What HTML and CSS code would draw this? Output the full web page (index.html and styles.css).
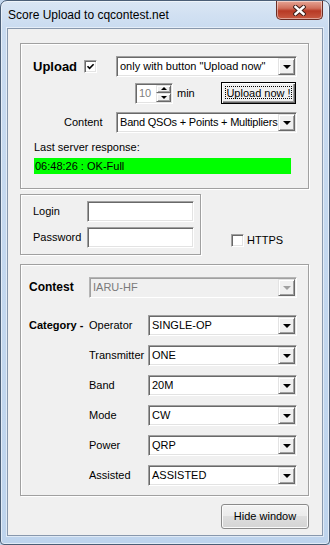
FILE: index.html
```html
<!DOCTYPE html>
<html lang="en">
  <head>
    <title>Score Upload to cqcontest.net</title>
    <meta charset="utf-8">
    <link rel="stylesheet" href="styles.css">
  </head>
  <body>

  <div class="window">

    <div class="titlebar">
      <span class="title">Score Upload to cqcontest.net</span>
      <span class="close">
        <svg width="13" height="11" viewBox="0 0 13 11">
          <path d="M2.5 2 L10.5 9 M10.5 2 L2.5 9" stroke="#40201b" stroke-width="4.4" stroke-linecap="square"/>
          <path d="M2.5 2 L10.5 9 M10.5 2 L2.5 9" stroke="#fff" stroke-width="2.4" stroke-linecap="square"/>
        </svg>
      </span>
    </div>

    <div class="client">

      <!-- upload settings -->
      <div class="group g-upload">
        <div class="row r-upload">
          <div class="upload-cell">
            <span class="lbl-big">Upload</span>
            <span class="check check-upload">
              <svg width="9" height="9" viewBox="0 0 9 9"><path d="M1.5 4.2 L3.6 6.4 L7.6 2.2" fill="none" stroke="#000" stroke-width="1.6"/></svg>
            </span>
          </div>
          <div class="combo c-wide">
            <span class="val">only with button "Upload now"</span>
            <span class="drop"><i class="tri"></i></span>
          </div>
        </div>

        <div class="row r-timer">
          <div class="spin">
            <span class="spin-val">10</span>
            <span class="spin-btns">
              <span class="sb"><i class="tri tri-up tri-sm"></i></span>
              <span class="sb"><i class="tri tri-sm"></i></span>
            </span>
          </div>
          <span class="min">min</span>
          <span class="btn-default"><span class="focus">Upload now !</span></span>
        </div>

        <div class="row r-content">
          <span class="content-lbl">Content</span>
          <div class="combo c-wide">
            <span class="val val-tight">Band QSOs + Points + Multipliers</span>
            <span class="drop"><i class="tri"></i></span>
          </div>
        </div>

        <div class="resp-lbl">Last server response:</div>
        <div class="resp">06:48:26 : OK-Full</div>
      </div>

      <!-- account -->
      <div class="login-row">
        <div class="group g-login">
          <div class="field">
            <span class="field-lbl">Login</span>
            <span class="edit"></span>
          </div>
          <div class="field field-2">
            <span class="field-lbl">Password</span>
            <span class="edit"></span>
          </div>
        </div>
        <div class="https">
          <span class="check"></span>
          <span class="https-lbl">HTTPS</span>
        </div>
      </div>

      <!-- contest / category -->
      <div class="group g-contest">
        <div class="row r-contest">
          <span class="cat cat-contest">Contest</span>
          <div class="combo c-contest disabled">
            <span class="val">IARU-HF</span>
            <span class="drop"><i class="tri"></i></span>
          </div>
        </div>

        <div class="row r-cat r-first">
          <span class="cat">Category -</span>
          <span class="cat-lbl">Operator</span>
          <div class="combo c-cat">
            <span class="val">SINGLE-OP</span>
            <span class="drop"><i class="tri"></i></span>
          </div>
        </div>

        <div class="row r-cat">
          <span class="cat"></span>
          <span class="cat-lbl">Transmitter</span>
          <div class="combo c-cat">
            <span class="val">ONE</span>
            <span class="drop"><i class="tri"></i></span>
          </div>
        </div>

        <div class="row r-cat">
          <span class="cat"></span>
          <span class="cat-lbl">Band</span>
          <div class="combo c-cat">
            <span class="val">20M</span>
            <span class="drop"><i class="tri"></i></span>
          </div>
        </div>

        <div class="row r-cat">
          <span class="cat"></span>
          <span class="cat-lbl">Mode</span>
          <div class="combo c-cat">
            <span class="val">CW</span>
            <span class="drop"><i class="tri"></i></span>
          </div>
        </div>

        <div class="row r-cat">
          <span class="cat"></span>
          <span class="cat-lbl">Power</span>
          <div class="combo c-cat">
            <span class="val">QRP</span>
            <span class="drop"><i class="tri"></i></span>
          </div>
        </div>

        <div class="row r-cat">
          <span class="cat"></span>
          <span class="cat-lbl">Assisted</span>
          <div class="combo c-cat">
            <span class="val">ASSISTED</span>
            <span class="drop"><i class="tri"></i></span>
          </div>
        </div>
      </div>

      <span class="btn-hide">Hide window</span>

    </div>
  </div>

  </body>
</html>
```

FILE: styles.css
```css
html, body {
  margin: 0;
  padding: 0;
}
body {
  background: #c3d7ee;
  color: #000;
  font-family: "Liberation Sans", Arial, sans-serif;
  font-size: 11px;
  line-height: 13px;
}

/* window frame */
.window {
  width: 330px;
  height: 545px;
  box-sizing: border-box;
  border: 1px solid #4b5e76;
  border-radius: 7px 7px 4px 4px;
  background: linear-gradient(#dae6f4, #c9dbf0 28px, #bed4ed);
  box-shadow: inset 0 0 0 1px rgba(255,255,255,0.55);
  display: flex;
  flex-direction: column;
}

.titlebar {
  height: 27px;
  flex-shrink: 0;
  display: flex;
  align-items: flex-start;
}
.title {
  font-size: 12px;
  line-height: 15px;
  padding: 7px 0 0 7px;
}
.close {
  margin-left: auto;
  margin-right: 6px;
  width: 47px;
  height: 19px;
  box-sizing: border-box;
  border: 1px solid #6b2d24;
  border-top: none;
  border-radius: 0 0 5px 5px;
  background: linear-gradient(#e6a595, #d0705c 40%, #b83a25 55%, #c85a42);
  box-shadow: inset 0 0 0 1px rgba(255,255,255,0.45);
  display: flex;
  align-items: center;
  justify-content: center;
}

.client {
  flex: 1;
  margin: 0 6px 8px 6px;
  border: 1px solid #8898ad;
  background: #f0f0f0;
  box-shadow: 0 0 0 1px rgba(255,255,255,0.5);
  padding: 14px 13px 0 12px;
  display: flex;
  flex-direction: column;
}

/* group boxes */
.group {
  box-sizing: border-box;
  border: 1px solid #a0a0a0;
  box-shadow: inset 1px 1px 0 #fff, 1px 1px 0 #fff;
}
.row {
  display: flex;
  align-items: center;
}

/* shared controls */
.combo, .edit, .spin, .check {
  box-sizing: border-box;
  background: #fff;
  border: 1px solid;
  border-color: #a0a0a0 #fff #fff #a0a0a0;
  box-shadow: inset 1px 1px 0 #696969, inset -1px -1px 0 #e3e3e3;
}
.combo {
  display: flex;
  height: 21px;
  padding: 1px;
}
.val {
  flex: 1;
  padding-left: 2px;
  line-height: 17px;
  white-space: nowrap;
  overflow: hidden;
}
.val-tight {
  letter-spacing: -0.2px;
}
.drop, .sb {
  box-sizing: border-box;
  background: #f0f0f0;
  border: 1px solid;
  border-color: #e3e3e3 #696969 #696969 #e3e3e3;
  box-shadow: inset 1px 1px 0 #fff, inset -1px -1px 0 #a0a0a0;
  display: flex;
  align-items: center;
  justify-content: center;
}
.drop {
  width: 17px;
  flex-shrink: 0;
}
.tri {
  width: 0;
  height: 0;
  border-left: 4px solid transparent;
  border-right: 4px solid transparent;
  border-top: 4px solid #000;
}
.tri-sm {
  border-left-width: 3px;
  border-right-width: 3px;
  border-top-width: 3px;
}
.tri-up {
  border-top: none;
  border-bottom: 3px solid #000;
}
.disabled {
  background: #f0f0f0;
  border-color: #b5b5b5 #fff #fff #b5b5b5;
  box-shadow: inset 1px 1px 0 #a0a0a0, inset -1px -1px 0 #f0f0f0;
}
.disabled .val {
  color: #7a7a7a;
}
.disabled .tri {
  border-top-color: #a0a0a0;
}
.check {
  width: 13px;
  height: 13px;
  display: flex;
  align-items: center;
  justify-content: center;
}

/* upload group */
.g-upload {
  height: 146px;
  padding: 12px 11px 0 0;
}
.r-upload {
  height: 21px;
}
.upload-cell {
  width: 95px;
  box-sizing: border-box;
  padding-left: 12px;
  display: flex;
  align-items: center;
}
.lbl-big {
  font-weight: bold;
  font-size: 13px;
}
.check-upload {
  margin-left: 7px;
}
.c-wide {
  width: 181px;
}

.r-timer {
  height: 22px;
  margin-top: 5px;
  padding-left: 114px;
}
.spin {
  width: 38px;
  height: 21px;
  display: flex;
  padding: 1px;
}
.spin-val {
  flex: 1;
  color: #808080;
  padding-left: 2px;
  line-height: 17px;
}
.spin-btns {
  width: 15px;
  display: flex;
  flex-direction: column;
}
.sb {
  flex: 1;
}
.min {
  margin-left: 4px;
}
.btn-default {
  margin-left: auto;
  margin-right: 1px;
  width: 75px;
  height: 22px;
  box-sizing: border-box;
  border: 1px solid #000;
  background: #f0f0f0;
  box-shadow: inset 1px 1px 0 #fff, inset -1px -1px 0 #696969, inset -2px -2px 0 #a0a0a0;
  padding: 3px 3px 4px 3px;
  display: flex;
}
.focus {
  flex: 1;
  border: 1px dotted #000;
  text-align: center;
  line-height: 12px;
}

.r-content {
  height: 21px;
  margin-top: 8px;
}
.content-lbl {
  width: 95px;
  box-sizing: border-box;
  padding-left: 43px;
}
.resp-lbl {
  margin: 8px 0 0 13px;
}
.resp {
  margin: 4px 0 0 13px;
  width: 257px;
  height: 16px;
  box-sizing: border-box;
  padding-left: 1px;
  line-height: 16px;
  background: #00ff00;
}

/* login group */
.login-row {
  display: flex;
  margin-top: 5px;
}
.g-login {
  width: 181px;
  height: 61px;
  padding: 6px 6px 0 12px;
}
.field {
  display: flex;
  align-items: center;
  height: 21px;
}
.field-2 {
  margin-top: 5px;
}
.field-lbl {
  width: 54px;
}
.edit {
  width: 107px;
  height: 21px;
}
.https {
  display: flex;
  align-items: center;
  height: 13px;
  margin: 40px 0 0 30px;
}
.https-lbl {
  margin-left: 3px;
}

/* contest group */
.g-contest {
  margin-top: 9px;
  height: 232px;
  padding: 12px 11px 0 0;
}
.r-contest {
  height: 21px;
}
.cat {
  width: 68px;
  flex-shrink: 0;
  box-sizing: border-box;
  padding-left: 8px;
  font-weight: bold;
  font-size: 11px;
  white-space: nowrap;
}
.cat-contest {
  font-size: 12px;
}
.c-contest {
  width: 208px;
}
.r-cat {
  height: 21px;
  margin-top: 9px;
}
.r-first {
  margin-top: 17px;
}
.cat-lbl {
  width: 59px;
  flex-shrink: 0;
}
.c-cat {
  width: 149px;
}

.btn-hide {
  align-self: flex-end;
  margin-top: 8px;
  width: 88px;
  height: 25px;
  box-sizing: border-box;
  border: 1px solid #8a8a8a;
  border-radius: 3px;
  background: linear-gradient(#f3f3f3, #ebebeb 50%, #dedede 50%, #d4d4d4);
  box-shadow: inset 0 0 0 1px #fbfbfb;
  text-align: center;
  line-height: 23px;
}
```
